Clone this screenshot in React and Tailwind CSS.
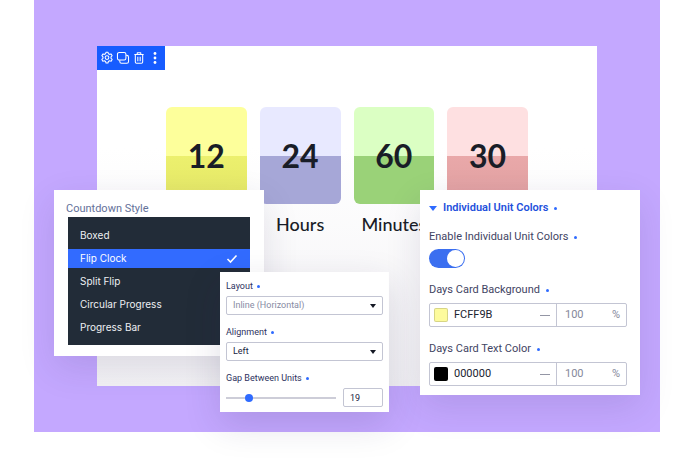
import React, { useState } from 'react';

const UNITS = [
  { id: 'days', value: '12', top: 'bg-[#fdff9b]', bottom: 'bg-linear-to-b from-[#ecf06e] to-[#e4e766]' },
  { id: 'hours', label: 'Hours', value: '24', top: 'bg-[#e8e9ff]', bottom: 'bg-[#a6a7d7]' },
  { id: 'minutes', label: 'Minutes', value: '60', top: 'bg-[#dbffc3]', bottom: 'bg-[#9ad278]' },
  { id: 'seconds', value: '30', top: 'bg-[#fee0e1]', bottom: 'bg-linear-to-b from-[#e9a8a9] to-[#e0a0a1]' },
];

const STYLES = ['Boxed', 'Flip Clock', 'Split Flip', 'Circular Progress', 'Progress Bar'];

function Dot() {
  return <span className="mt-px inline-block size-[3px] rounded-full bg-[#2f6bff]" />;
}

function Toolbar() {
  return (
    <div className="flex h-6 w-[68px] items-center justify-around bg-[#175cff] px-0.5 text-white">
      <button aria-label="Settings">
        <svg className="size-[14px]" viewBox="0 0 24 24" fill="none" stroke="currentColor" strokeWidth="1.8" strokeLinejoin="round">
          <path d="M9.6 4.6 10.400 2h3.200l.8 2.600 2 1.200 2.700-.6 1.700 2.900-1.900 2v2.400l1.900 2-1.700 2.900-2.700-.6-2 1.200-.8 2.600h-3.200l-.8-2.600-2-1.200-2.700.6-1.700-2.900 1.900-2v-2.400l-1.900-2 1.700-2.900 2.700.6z" />
          <circle cx="12" cy="11.300" r="3.200" />
        </svg>
      </button>
      <button aria-label="Duplicate">
        <svg className="size-[14px]" viewBox="0 0 24 24" fill="none" stroke="currentColor" strokeWidth="1.8" strokeLinejoin="round">
          <rect x="2.500" y="2.500" width="14.500" height="13" rx="3" />
          <path d="M6.500 16v2a3 3 0 0 0 3 3h9a3 3 0 0 0 3-3v-7.500a3 3 0 0 0-3-3H17.500" />
        </svg>
      </button>
      <button aria-label="Delete">
        <svg className="size-[14px]" viewBox="0 0 24 24" fill="none" stroke="currentColor" strokeWidth="1.8" strokeLinejoin="round">
          <path d="M4 6h16M9 5.500V3h6v2.500M5.700 6.500V19a2 2 0 0 0 2 2h8.600a2 2 0 0 0 2-2V6.500M10 10v7.500M14 10v7.500" />
        </svg>
      </button>
      <button aria-label="More">
        <svg className="size-[14px]" viewBox="0 0 14 14" fill="currentColor">
          <circle cx="7" cy="2.500" r="1.400" />
          <circle cx="7" cy="7" r="1.400" />
          <circle cx="7" cy="11.500" r="1.400" />
        </svg>
      </button>
    </div>
  );
}

function FlipCard({ unit }) {
  return (
    <div className="flex flex-col items-center gap-2">
      <div className="grid h-[97px] w-full overflow-hidden rounded-md">
        <div className="col-start-1 row-start-1 grid grid-rows-2">
          <div className={unit.top} />
          <div className={unit.bottom} />
        </div>
        <div className="z-10 col-start-1 row-start-1 self-center text-center text-[32px] leading-none font-bold text-[#191d27]">
          {unit.value}
        </div>
      </div>
      {unit.label && (
        <div className="text-lg leading-6 font-medium text-[#191d27]">{unit.label}</div>
      )}
    </div>
  );
}

function StylePanel() {
  const [selected, setSelected] = useState('Flip Clock');

  return (
    <div className="absolute top-[190px] left-5 w-[210px] bg-white px-3 pt-3 pb-[11px] shadow-[0_12px_34px_rgba(40,35,80,0.12)]">
      <h2 id="style-label" className="text-[11px] leading-[13px] text-[#64719a]">Countdown Style</h2>
      <div role="listbox" aria-labelledby="style-label" className="mx-0.5 mt-0.5 flex flex-col gap-1 bg-[#222c38] pt-[9px] pb-2 font-['Inter',sans-serif]">
        {STYLES.map((name) => (
          <button
            key={name}
            role="option"
            aria-selected={selected === name}
            onClick={() => setSelected(name)}
            className={`flex h-[19px] items-center justify-between px-3 text-[10px] ${
              selected === name ? 'bg-[#326bff] text-white' : 'text-[#eef0f3]'
            }`}
          >
            {name}
            {selected === name && (
              <svg className="size-3" viewBox="0 0 12 12" fill="none" stroke="currentColor" strokeWidth="1.600">
                <path d="M1.500 6 4.500 9 10.500 2.500" />
              </svg>
            )}
          </button>
        ))}
      </div>
    </div>
  );
}

function SelectField({ id, label, options, textClass }) {
  return (
    <div className="flex flex-col gap-1">
      <label htmlFor={id} className="flex items-center gap-1 text-[9px] leading-3 text-[#2d3260]">
        {label} <Dot />
      </label>
      <div className="grid items-center">
        <select
          id={id}
          className={`col-start-1 row-start-1 h-[19px] w-full appearance-none rounded-xs border border-[#c3c5d3] bg-white pl-1.5 text-[9px] ${textClass}`}
        >
          {options.map((o) => <option key={o}>{o}</option>)}
        </select>
        <svg className="pointer-events-none col-start-1 row-start-1 mr-[7px] h-1 w-1.5 justify-self-end" viewBox="0 0 6 4">
          <path d="M0 0h6L3 4z" fill="#141824" />
        </svg>
      </div>
    </div>
  );
}

function LayoutPanel() {
  const [gap, setGap] = useState(19);

  return (
    <div className="absolute top-[272px] left-[186px] flex w-[169px] flex-col gap-[11px] bg-white px-1.5 pt-2 pb-[5px] shadow-[0_12px_34px_rgba(40,35,80,0.15)]">
      <SelectField id="layout" label="Layout" options={['Inline (Horizontal)', 'Stacked']} textClass="text-[#878ba3]" />
      <SelectField id="alignment" label="Alignment" options={['Left', 'Center', 'Right']} textClass="text-[#20243f]" />
      <div className="flex flex-col gap-1">
        <label htmlFor="gap" className="flex items-center gap-1 text-[9px] leading-3 text-[#2d3260]">
          Gap Between Units <Dot />
        </label>
        <div className="flex items-center gap-[7px]">
          <input
            id="gap"
            type="range"
            min="0"
            max="100"
            value={gap}
            onChange={(e) => setGap(Number(e.target.value))}
            className="h-2 min-w-0 flex-1 appearance-none bg-transparent [&::-webkit-slider-runnable-track]:h-0.5 [&::-webkit-slider-runnable-track]:bg-[#cdcdd8] [&::-webkit-slider-thumb]:-mt-[3px] [&::-webkit-slider-thumb]:size-2 [&::-webkit-slider-thumb]:appearance-none [&::-webkit-slider-thumb]:rounded-full [&::-webkit-slider-thumb]:bg-[#2f6bff]"
          />
          <input
            aria-label="Gap value"
            value={gap}
            onChange={(e) => setGap(Number(e.target.value) || 0)}
            className="h-[19px] w-10 rounded-xs border border-[#c3c5d3] pl-1.5 text-[9px] text-[#20243f]"
          />
        </div>
      </div>
    </div>
  );
}

function ColorField({ id, label, color, swatch }) {
  return (
    <div className="flex flex-col gap-1.5">
      <label htmlFor={id} className="flex items-center gap-1.5 text-[11px] leading-[14px] text-[#3f4463]">
        {label} <Dot />
      </label>
      <div className="flex h-6 items-center rounded-xs border border-[#c3c5d3] text-[11px]">
        <button aria-label={`Pick ${label}`} className={`ml-1 size-3.5 shrink-0 rounded-xs border border-black/15 ${swatch}`} />
        <input id={id} defaultValue={color} className="ml-1.5 min-w-0 flex-1 text-[#20232f]" />
        <span className="mr-1.5 h-px w-2.5 bg-[#9496a5]" />
        <div className="flex h-full w-[70px] items-center border-l border-[#c3c5d3] pr-1.5 pl-2 text-[#85889a]">
          <input aria-label={`${label} opacity`} defaultValue="100" className="min-w-0 flex-1" />
          <span>%</span>
        </div>
      </div>
    </div>
  );
}

function ColorsPanel() {
  const [enabled, setEnabled] = useState(true);

  return (
    <div className="absolute top-[190px] right-5 w-[220px] bg-white pt-[11px] pr-[13px] pb-[9px] pl-[9px] shadow-[0_12px_34px_rgba(40,35,80,0.12)]">
      <button className="flex items-center gap-1.5 text-[11px] leading-[14px] font-semibold text-[#1e50dc]">
        <svg className="h-[5px] w-2" viewBox="0 0 8 5">
          <path d="M0 0h8L4 5z" fill="#2f6bff" />
        </svg>
        Individual Unit Colors <Dot />
      </button>
      <label htmlFor="enable" className="mt-[15px] flex items-center gap-1.5 text-[11px] leading-[14px] text-[#3f4463]">
        Enable Individual Unit Colors <Dot />
      </label>
      <div className="mt-[5px] grid h-[19px] w-9 items-center">
        <input
          id="enable"
          type="checkbox"
          role="switch"
          checked={enabled}
          onChange={(e) => setEnabled(e.target.checked)}
          className="peer col-start-1 row-start-1 h-full w-full appearance-none rounded-full bg-gray-300 checked:bg-[#3b6ff0]"
        />
        <span className="pointer-events-none col-start-1 row-start-1 ml-px size-[17px] rounded-full bg-white peer-checked:mr-px peer-checked:justify-self-end" />
      </div>
      <div className="mt-[15px] flex flex-col gap-[15px]">
        <ColorField id="days-bg" label="Days Card Background" color="FCFF9B" swatch="bg-[#fdfb9d]" />
        <ColorField id="days-text" label="Days Card Text Color" color="000000" swatch="bg-black" />
      </div>
    </div>
  );
}

export default function App() {
  return (
    <div className="bg-white pr-[26px] pb-[35px] pl-[34px] font-['Roboto',sans-serif]">
      <main className="relative bg-[#c4a8ff] px-[63px] py-[46px]">
        <section className="bg-linear-to-b from-white from-30% to-[#f3f2f5]">
          <Toolbar />
          <div className="grid grid-cols-4 gap-[13px] px-[69px] pt-[37px] pb-[150px] font-['Lato',sans-serif]">
            {UNITS.map((unit) => (
              <FlipCard key={unit.id} unit={unit} />
            ))}
          </div>
        </section>
        <StylePanel />
        <LayoutPanel />
        <ColorsPanel />
      </main>
    </div>
  );
}
